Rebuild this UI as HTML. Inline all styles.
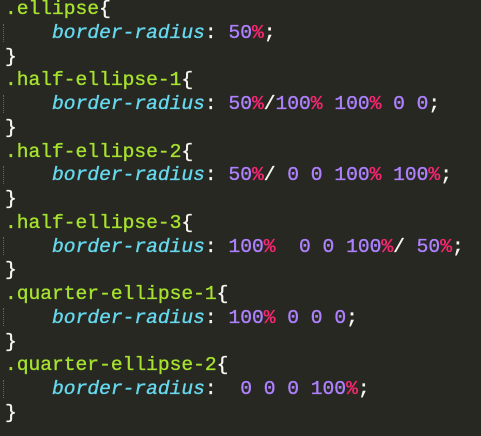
<!DOCTYPE html>
<html><head><meta charset="utf-8"><style>
html,body{margin:0;padding:0;background:#272822;width:481px;height:436px;overflow:hidden}
pre{margin:0;position:absolute;top:-2px;left:5px;font-family:"Liberation Mono",monospace;font-size:19.6px;line-height:23.75px;color:#f8f8f2;letter-spacing:0;-webkit-text-stroke:0.35px currentColor}
.s{color:#a6e22e}.p{color:#66d9ef;font-style:italic}.n{color:#ae81ff}.k{color:#f92672}
.g{position:absolute;left:3px;width:0;border-left:1px dotted #666}
</style></head><body>
<div class="g" style="top:24px;height:18px"></div>
<div class="g" style="top:95px;height:18px"></div>
<div class="g" style="top:166px;height:18px"></div>
<div class="g" style="top:237px;height:18px"></div>
<div class="g" style="top:308px;height:18px"></div>
<div class="g" style="top:380px;height:18px"></div>
<pre><span class="s">.ellipse</span>{
    <span class="p">border-radius</span>: <span class="n">50</span><span class="k">%</span>;
}
<span class="s">.half-ellipse-1</span>{
    <span class="p">border-radius</span>: <span class="n">50</span><span class="k">%</span>/<span class="n">100</span><span class="k">%</span> <span class="n">100</span><span class="k">%</span> <span class="n">0</span> <span class="n">0</span>;
}
<span class="s">.half-ellipse-2</span>{
    <span class="p">border-radius</span>: <span class="n">50</span><span class="k">%</span>/ <span class="n">0</span> <span class="n">0</span> <span class="n">100</span><span class="k">%</span> <span class="n">100</span><span class="k">%</span>;
}
<span class="s">.half-ellipse-3</span>{
    <span class="p">border-radius</span>: <span class="n">100</span><span class="k">%</span>  <span class="n">0</span> <span class="n">0</span> <span class="n">100</span><span class="k">%</span>/ <span class="n">50</span><span class="k">%</span>;
}
<span class="s">.quarter-ellipse-1</span>{
    <span class="p">border-radius</span>: <span class="n">100</span><span class="k">%</span> <span class="n">0</span> <span class="n">0</span> <span class="n">0</span>;
}
<span class="s">.quarter-ellipse-2</span>{
    <span class="p">border-radius</span>:  <span class="n">0</span> <span class="n">0</span> <span class="n">0</span> <span class="n">100</span><span class="k">%</span>;
}</pre>
</body></html>
